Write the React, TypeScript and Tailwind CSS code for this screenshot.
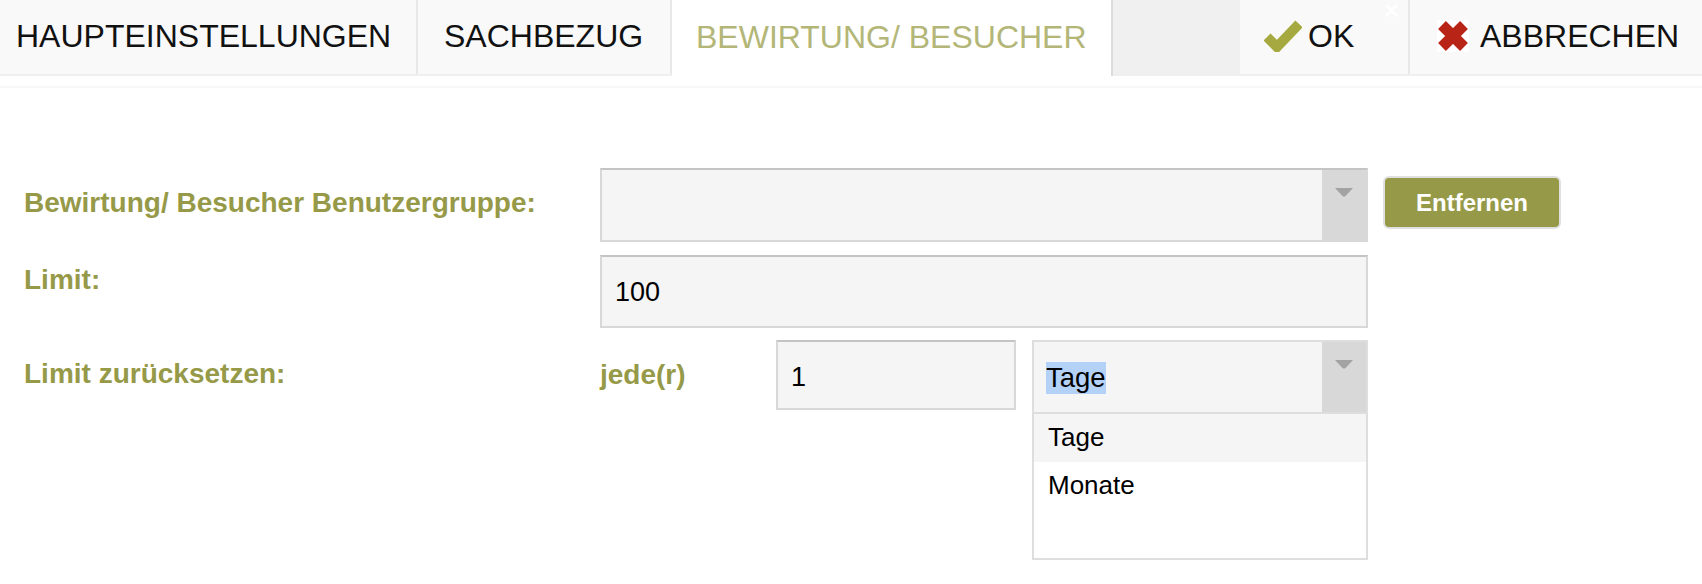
const font = "font-['Liberation_Sans',Arial,sans-serif]";

function Chevron() {
  return (
    <div className="flex w-[44px] shrink-0 justify-center bg-[#d8d8d8] pt-[17px]">
      <svg width="18" height="10" viewBox="0 0 18 10">
        <path d="M0 1h18L10 9.5H8z" fill="#a3a3a3" />
      </svg>
    </div>
  );
}

function Tab({ children, active, className }: { children: React.ReactNode; active?: boolean; className: string }) {
  return (
    <div
      className={
        active
          ? `flex items-center bg-white pb-[2px] text-[#b3b677] ${className}`
          : `flex items-center bg-[#f9f9f9] pb-[2px] text-[#111] ${className}`
      }
    >
      {children}
    </div>
  );
}

export default function App() {
  return (
    <div className={`${font} h-[584px] w-[1702px] overflow-hidden bg-white text-black`}>
      <div className="flex h-[76px] border-b-2 border-[#efefef] text-[32px]">
        <Tab className="w-[418px] border-r-2 border-[#e8e8e8] pl-4">HAUPTEINSTELLUNGEN</Tab>
        <Tab className="w-[254px] border-r-2 border-[#e8e8e8] pl-[26px]">SACHBEZUG</Tab>
        <Tab active className="-mb-[2px] w-[441px] border-r-2 border-[#dcdcdc] pl-6">
          BEWIRTUNG/ BESUCHER
        </Tab>
        <div className="w-[127px] bg-[#f0f0f0]" />
        <Tab className="relative w-[170px] border-r-2 border-[#e8e8e8] pl-6">
          <svg width="38" height="32" viewBox="0 0 38 32" className="mr-[6px] blur-[0.5px]">
            <path d="M3 17l10 10L35 4" fill="none" stroke="#a5a93f" strokeWidth="10" strokeLinejoin="miter" />
          </svg>
          OK
          <svg width="13" height="13" viewBox="0 0 13 13" className="absolute right-[10px] top-[4px]">
            <path d="M1 1l11 11M12 1L1 12" fill="none" stroke="#fff" strokeWidth="2.5" />
          </svg>
        </Tab>
        <Tab className="flex-1 pl-[27px]">
          <svg width="32" height="32" viewBox="0 0 32 32" className="mr-[11px] bg-white blur-[0.5px]">
            <path d="M5 5l22 22M27 5L5 27" fill="none" stroke="#b82416" strokeWidth="11" />
          </svg>
          ABBRECHEN
        </Tab>
      </div>
      <div className="mt-[10px] h-[2px] bg-[#f8f8f8]" />

      <div className="grid grid-cols-[576px_768px_1fr] items-start gap-y-3 pl-6 pt-[80px]">
        <div className="pt-[19px] text-[28px] font-bold leading-[32px] text-[#969a48]">
          Bewirtung/ Besucher Benutzergruppe:
        </div>
        <div className="mb-[1px] flex h-[74px] border-2 border-[#d8d8d8] border-t-[#c4c4c4] bg-[#f5f5f5]">
          <div className="flex-1" />
          <Chevron />
        </div>
        <button className="ml-[15px] mt-2 h-[53px] w-[178px] rounded-[6px] border-2 border-[#e0e0e0] bg-[#969a48] text-[24px] font-bold text-white">
          Entfernen
        </button>

        <div className="pt-[9px] text-[28px] font-bold leading-[32px] text-[#969a48]">Limit:</div>
        <div className="flex h-[73px] items-center border-2 border-[#d8d8d8] border-t-[#c4c4c4] bg-[#f5f5f5] pl-[13px] pt-[2px] text-[27px]">
          100
        </div>
        <div />

        <div className="pt-[18px] text-[28px] font-bold leading-[32px] text-[#969a48]">Limit zurücksetzen:</div>
        <div className="flex items-start">
          <div className="w-[176px] pt-[19px] text-[28px] font-bold leading-[32px] text-[#969a48]">jede(r)</div>
          <div className="flex h-[70px] w-[240px] items-center border-2 border-[#d8d8d8] border-t-[#c4c4c4] bg-[#f5f5f5] pl-[13px] pt-1 text-[27px]">
            1
          </div>
          <div className="ml-4 w-[336px]">
            <div className="flex h-[74px] border-2 border-[#dedede] bg-[#f5f5f5]">
              <div className="flex flex-1 items-center pl-3 pt-[2px] text-[27.5px]">
                <span className="bg-[#b4d2f8] leading-[32px]">Tage</span>
              </div>
              <Chevron />
            </div>
            <div className="h-[146px] border-2 border-t-0 border-[#dedede] text-[26px]">
              <div className="flex h-12 items-center bg-[#f5f5f5] pb-[1px] pl-[14px]">Tage</div>
              <div className="flex h-12 items-center pb-[1px] pl-[14px]">Monate</div>
            </div>
          </div>
        </div>
      </div>
    </div>
  );
}
